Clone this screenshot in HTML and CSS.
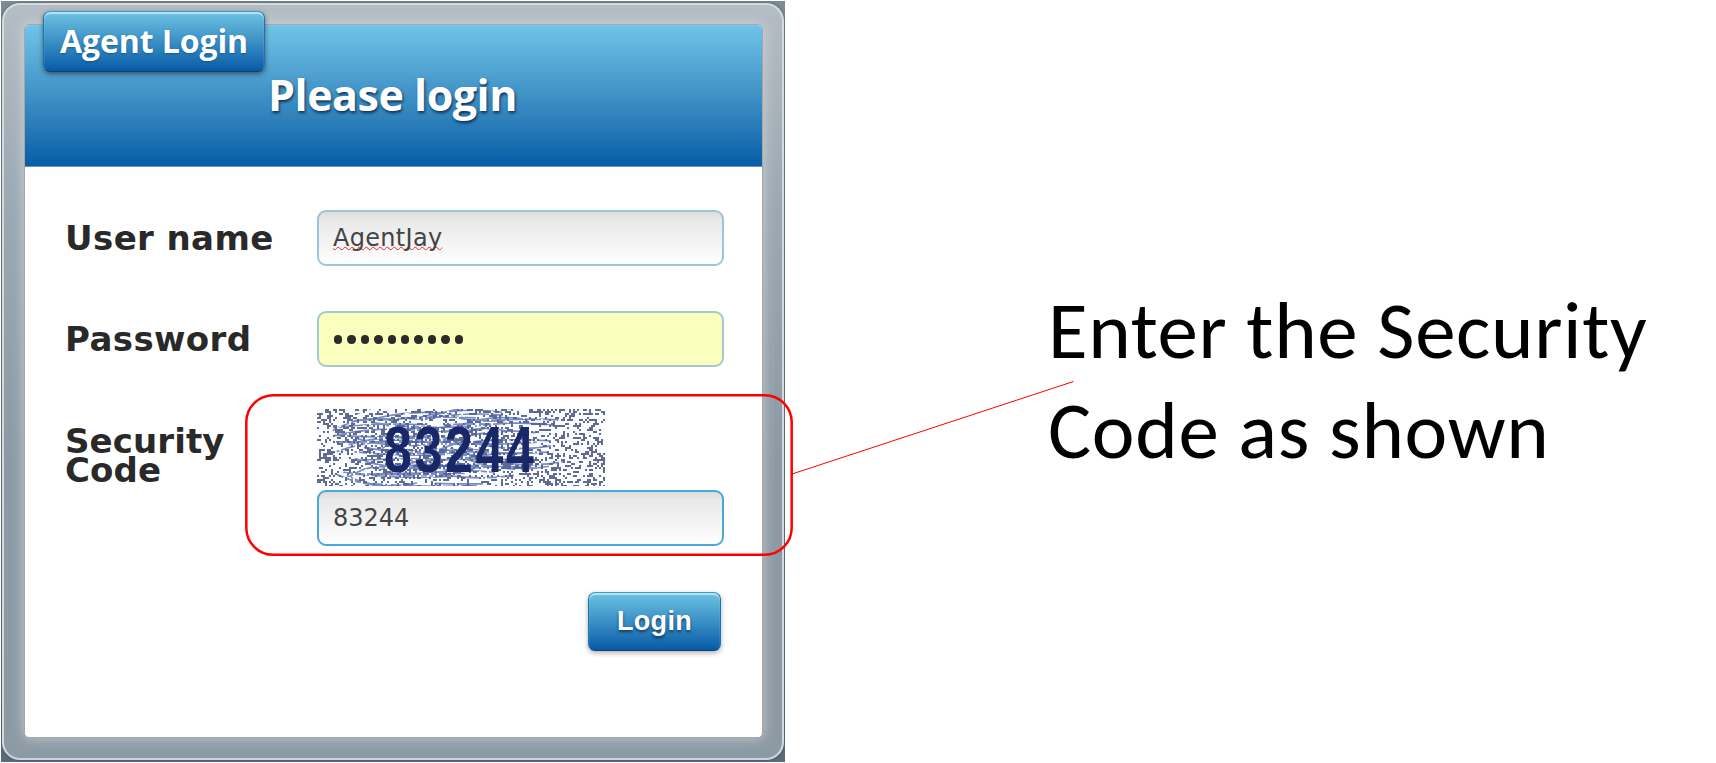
FILE: index.html
```html
<!DOCTYPE html>
<html lang="en">
<head>
<meta charset="utf-8">
<title>Agent Login</title>
<link rel="stylesheet" href="styles.css">
</head>
<body>
<main class="page">
  <section class="backdrop">
    <div class="frame">
      <form class="card">
        <header class="card-header"><h1 class="title"><span>Please login</span></h1></header>
        <div class="tag"><span>Agent Login</span></div>
        <div class="fields">
          <div class="row">
            <div class="label">User name</div>
            <div class="field"><span class="misspelt">AgentJay</span></div>
          </div>
          <div class="row">
            <div class="label">Password</div>
            <div class="field filled"><span class="dots"><i></i><i></i><i></i><i></i><i></i><i></i><i></i><i></i><i></i><i></i></span></div>
          </div>
          <div class="row code-row">
            <div class="label code-label">Security<br>Code</div>
            <div class="code-column">
              <svg class="captcha" viewBox="0 0 288 77">
                <rect width="288" height="77" fill="#fcfeff"/>
                <path id="noise" fill="#626a90"/>
                <g id="scribble" fill="none" stroke="#4f67a8" stroke-width="1.7" opacity=".75"></g>
                <path id="light" fill="#f7fcff"/>
                <text class="captcha-text" transform="translate(67 63) scale(.78 1)" textLength="192">83244</text>
              </svg>
              <div class="field focused"><span class="code">83244</span></div>
            </div>
          </div>
        </div>
        <div class="actions"><div class="button"><span>Login</span></div></div>
      </form>
    </div>
  </section>
  <aside class="note"><span class="line-one">Enter the Security</span><br><span class="line-two">Code as shown</span></aside>
  <svg class="callout" viewBox="0 0 1716 763">
    <rect x="246.3" y="395.2" width="545.4" height="159.6" rx="27" fill="none" stroke="#f00" stroke-width="2.5"/>
    <path d="M792 474L1073.500 381.500" stroke="#f00" stroke-width="1"/>
  </svg>
</main>
<script src="captcha.js"></script>
</body>
</html>
```
FILE: styles.css
```css
* { box-sizing: border-box; }
body { margin: 0; background: #fff; }
.page { position: relative; display: flex; width: 1716px; height: 763px; overflow: hidden; }
.backdrop { width: 784px; height: 761px; margin: 1px 0 0 1px; padding: 2px 1px 2px; background: linear-gradient(#7b8c92, #576b7b); overflow: hidden; flex: none; }
.frame { height: 757px; border: 2px solid #d4dade; border-bottom-color: #ccd3d9; border-radius: 18px; padding: 19px 19px 20px 20px; background: linear-gradient(#b4bcc5, #9aa8b1 28%, #8c9aa5 60%, #8c9aa4); box-shadow: 0 0 3px #46545e; }
.card { position: relative; height: 100%; margin: 0; background: #fff; border: 1px solid #a4a6a8; border-radius: 5px; box-shadow: 0 0 14px rgba(235,235,235,.6); }
.card-header { height: 142px; border-radius: 4px 4px 0 0; border-top: 1px solid #74cdf0; border-bottom: 1px solid #6d92ad; background: linear-gradient(#6dc4e8, #4d9fcf 36%, #2f82bb 65%, #075da7); display: flex; justify-content: center; }
.title { margin: 34px 2px 0 0; height: 70px; width: 270px; text-align: center; font: 700 43px/70px "Open Sans", sans-serif; letter-spacing: -.5px; color: #fff; text-shadow: 1px 2px 3px rgba(0,20,50,.75); white-space: nowrap; }
.tag { position: absolute; left: 18px; top: -14px; width: 222px; height: 61px; }
.tag, .button { display: flex; align-items: center; justify-content: center; color: #fff; border: 1px solid #1c73b0; border-top-color: #4396c3; border-bottom-color: #063f7c; border-radius: 7px; background: linear-gradient(#6bc2e2, #4095c8 45%, #075ba6); box-shadow: inset 0 2px 1px #b9e5f5, 0 2px 5px rgba(40,20,10,.55); white-space: nowrap; }
.tag { padding-bottom: 1px; font: 700 32px/58px "Open Sans", sans-serif; letter-spacing: -.1px; text-shadow: 0 1px 2px rgba(0,60,120,.5); }
.fields { padding: 43px 37px 0 40px; }
.row { display: flex; height: 55px; margin-bottom: 46px; align-items: center; }
.label { width: 252px; flex: none; padding-top: 2px; font: 700 34px/29px "DejaVu Sans", sans-serif; color: #292929; letter-spacing: .4px; white-space: nowrap; }
.field { width: 407px; height: 56px; flex: none; border: 2px solid #9cc5dc; border-radius: 9px; background: linear-gradient(#dcdcdc, #e9e9e9 15%, #f0f0f0 45%, #fff); padding-left: 14px; font: 24px/53px "DejaVu Sans", sans-serif; color: #444; }
.misspelt { display: inline-block; letter-spacing: .3px; text-decoration: underline wavy #f02828 1.3px; text-decoration-skip-ink: none; text-underline-offset: 0; }
.filled { background: #faffbd; border-color: #a2cad1; }
.dots { display: flex; height: 54px; padding-left: 1px; align-items: center; gap: 5px; }
.dots i { width: 8.4px; height: 8.4px; border-radius: 50%; background: #2b2b2b; }
.code-row { height: 136px; align-items: flex-start; margin-bottom: 0; }
.code-label { padding-top: 15px; letter-spacing: .1px; }
.code-column { display: flex; flex-direction: column; gap: 4px; margin-top: -3px; }
.captcha { width: 288px; height: 77px; display: block; }
.captcha-text { font: 700 64px "Liberation Sans", sans-serif; fill: #182767; }
.focused { border-color: #4ba7d5; }
.actions { display: flex; justify-content: flex-end; padding: 44px 41px 0 0; }
.button { width: 133px; height: 59px; padding-bottom: 2px; font: 700 27px/56px "Liberation Sans", sans-serif; letter-spacing: .3px; text-shadow: 0 2px 3px rgba(0,20,50,.65); box-shadow: inset 0 2px 1px #b9e5f5, 0 2px 5px rgba(40,20,10,.35); }
.note { margin: 281px 0 0 263px; font: 81px/100px Carlito, Lato, sans-serif; letter-spacing: .65px; color: #000; white-space: nowrap; }
.callout { position: absolute; inset: 0; width: 1716px; height: 763px; pointer-events: none; }
```
FILE: captcha.js
```js
// Deterministic speckle and scribble texture behind the security code.
let seed = 8324;
function random() {
  seed = (seed * 1664525 + 1013904223) % 4294967296;
  return seed / 4294967296;
}
const step = 2;
let dark = "";
let light = "";
for (let y = 0; y < 77; y += step) {
  for (let x = 0; x < 288; x += step) {
    const r = random();
    const cell = `M${x} ${y}h${step + (r < 0.06 ? step : 0)}v${step}H${x}z`;
    if (r < 0.27) dark += cell;
    else if (r > 0.9) light += cell;
  }
}
document.getElementById("noise").setAttribute("d", dark);
document.getElementById("light").setAttribute("d", light);
const group = document.getElementById("scribble");
for (let i = 0; i < 62; i++) {
  const x = 12 + random() * 150;
  const y = 2 + random() * 73;
  const w = 45 + random() * 75;
  const h = (random() - 0.5) * 42;
  const line = document.createElementNS("http://www.w3.org/2000/svg", "path");
  line.setAttribute("d", `M${x} ${y}q${w / 2} ${h} ${w} ${h / 2}`);
  group.appendChild(line);
}
```
